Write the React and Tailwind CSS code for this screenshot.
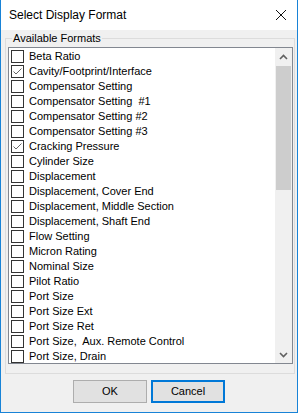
import React from 'react';

const formats = [
  { name: 'Beta Ratio', checked: false },
  { name: 'Cavity/Footprint/Interface', checked: true },
  { name: 'Compensator Setting', checked: false },
  { name: 'Compensator Setting  #1', checked: false },
  { name: 'Compensator Setting #2', checked: false },
  { name: 'Compensator Setting #3', checked: false },
  { name: 'Cracking Pressure', checked: true },
  { name: 'Cylinder Size', checked: false },
  { name: 'Displacement', checked: false },
  { name: 'Displacement, Cover End', checked: false },
  { name: 'Displacement, Middle Section', checked: false },
  { name: 'Displacement, Shaft End', checked: false },
  { name: 'Flow Setting', checked: false },
  { name: 'Micron Rating', checked: false },
  { name: 'Nominal Size', checked: false },
  { name: 'Pilot Ratio', checked: false },
  { name: 'Port Size', checked: false },
  { name: 'Port Size Ext', checked: false },
  { name: 'Port Size Ret', checked: false },
  { name: 'Port Size,  Aux. Remote Control', checked: false },
  { name: 'Port Size, Drain', checked: false },
];

const CheckBox = ({ checked }) => (
  <span className="w-[13px] h-[13px] border border-[#333333] bg-white flex items-center justify-center shrink-0">
    {checked && (
      <svg width="11" height="11" viewBox="0 0 11 11">
        <polyline points="1.5,5.5 4,8 9.5,2.5" fill="none" stroke="#666666" strokeWidth="1" />
      </svg>
    )}
  </span>
);

const App = () => {
  return (
    <div
      className="w-[298px] h-[413px] flex flex-col bg-[#f0f0f0] border-l border-r border-b border-[#1883d7] text-black"
      style={{ fontFamily: '"Liberation Sans", Arial, sans-serif' }}
    >
      {/* Title bar */}
      <div className="h-[30px] bg-white flex items-center justify-between pl-[8px] pr-[8px] shrink-0">
        <span className="text-[12px] leading-none">Select Display Format</span>
        <svg width="12" height="12" viewBox="0 0 12 12" className="mr-[2px]">
          <path d="M1 1 L11 11 M11 1 L1 11" stroke="#111111" strokeWidth="1" />
        </svg>
      </div>

      {/* Group box */}
      <fieldset className="mt-[2px] ml-[4px] mr-[2px] border border-[#dcdcdc] pl-[2px] pr-[1px] pb-[9px]">
        <legend className="ml-[4px] px-[1px] text-[11px] leading-[13px]">Available Formats</legend>
        <div className="mt-[2px] h-[317px] border border-[#828790] bg-white flex overflow-hidden">
          <div className="flex-1 pt-[1px] overflow-hidden">
            {formats.map((f) => (
              <div key={f.name} className="h-[15px] flex items-center pl-[2px] gap-[5px] whitespace-pre">
                <CheckBox checked={f.checked} />
                <span className="text-[11px] leading-none">{f.name}</span>
              </div>
            ))}
          </div>
          {/* Scrollbar */}
          <div className="w-[17px] bg-[#f0f0f0] flex flex-col">
            <div className="h-[18px] flex items-center justify-center">
              <svg width="9" height="6" viewBox="0 0 9 6">
                <path d="M1 5 L4.5 1.5 L8 5" fill="none" stroke="#606060" strokeWidth="1.6" />
              </svg>
            </div>
            <div className="h-[124px] mx-[1px] bg-[#cdcdcd]" />
            <div className="flex-1" />
            <div className="h-[17px] flex items-center justify-center">
              <svg width="9" height="6" viewBox="0 0 9 6">
                <path d="M1 1 L4.5 4.5 L8 1" fill="none" stroke="#606060" strokeWidth="1.6" />
              </svg>
            </div>
          </div>
        </div>
      </fieldset>

      {/* Buttons */}
      <div className="flex gap-[4px] pl-[72px] mt-[6px]">
        <button className="w-[74px] h-[23px] bg-[#e1e1e1] border border-[#adadad] text-[11px]">OK</button>
        <button className="w-[74px] h-[23px] bg-[#e1e1e1] border-2 border-[#0078d7] text-[11px]">Cancel</button>
      </div>
    </div>
  );
};

export default App;
